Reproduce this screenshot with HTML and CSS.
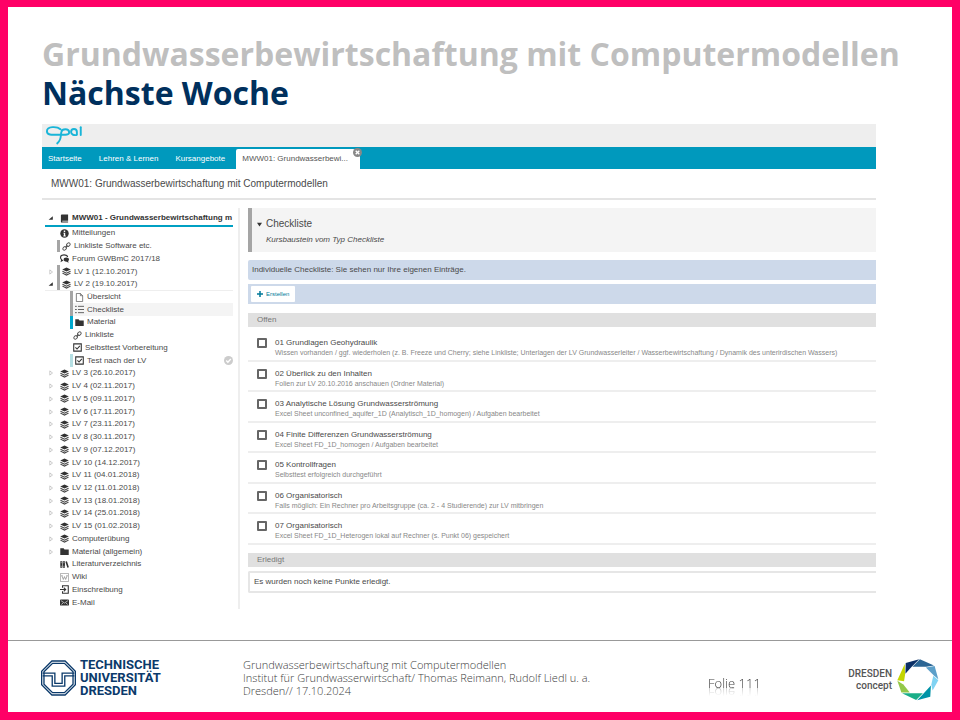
FILE: index.html
```html
<!DOCTYPE html>
<html lang="de">
<head>
<meta charset="utf-8">
<meta name="viewport" content="width=device-width, initial-scale=1">
<title>Grundwasserbewirtschaftung mit Computermodellen – Nächste Woche</title>
<link rel="stylesheet" href="styles.css">
</head>
<body>
<svg class="defs" aria-hidden="true">
  <symbol id="closed" viewBox="0 0 10 10"><path d="M3 1.500 7.500 5 3 8.500Z" fill="#fff" stroke="#aaa"/></symbol>
  <symbol id="open" viewBox="0 0 10 10"><path d="M8 2V8H1Z" fill="#333"/></symbol>
  <symbol id="book" viewBox="0 0 10 10"><path d="M1 1.500Q1 .5 2 .5H9V7.500H2.500V8.200H9V9.500H2Q1 9.500 1 8.500Z" fill="#333"/></symbol>
  <symbol id="info" viewBox="0 0 10 10"><circle cx="5" cy="5" r="4.700" fill="#333"/><path d="M4.200 1.800H5.800V3.200H4.200ZM3.700 4.200H5.800V7.300H6.400V8.200H3.700V7.300H4.300V5H3.700Z" fill="#fff"/></symbol>
  <symbol id="link" viewBox="0 0 10 10"><g fill="none" stroke="#555" stroke-width="1.100"><rect x="-2.300" y="-1.600" width="4.600" height="3.200" rx="1.600" transform="translate(3 7) rotate(-45)"/><rect x="-2.300" y="-1.600" width="4.600" height="3.200" rx="1.600" transform="translate(7 3) rotate(-45)"/><path d="M3.800 6.200 6.200 3.800"/></g></symbol>
  <symbol id="forum" viewBox="0 0 10 10"><path d="M4.500 1C2 1 .6 2.300.6 4c0 1 .5 1.800 1.300 2.300L1.500 8l2-1.200M4.500 1C7 1 8.300 2 8.500 3.300" fill="none" stroke="#333" stroke-width="1.200"/><path d="M7 3.800c2 0 3 1 3 2.300 0 .8-.4 1.400-1 1.800l.6 1.900-2.300-1.300C5 8.500 4 7.500 4 6.100s1-2.300 3-2.300Z" fill="#333"/></symbol>
  <symbol id="layers" viewBox="0 0 10 10"><path d="M5 .5 9.700 2.700 5 5 .3 2.700Z" fill="#333"/><path d="M.5 4.700 5 6.800 9.500 4.700M.5 6.800 5 9 9.500 6.800" fill="none" stroke="#444" stroke-width="1.200"/></symbol>
  <symbol id="page" viewBox="0 0 10 10"><path d="M1.500.5H6L8.500 3V9.500H1.500ZM6 .5V3H8.500" fill="none" stroke="#555" stroke-width=".8"/></symbol>
  <symbol id="list" viewBox="0 0 10 10"><path d="M0 1.500H2M0 5H2M0 8.500H2M3.300 1.500H10M3.300 5H10M3.300 8.500H10" stroke="#555"/></symbol>
  <symbol id="folder" viewBox="0 0 10 10"><path d="M.3 1.500H4L5 2.700H9.700V9H.3Z" fill="#333"/></symbol>
  <symbol id="test" viewBox="0 0 10 10"><path d="M.8 1H9.200V9H.8Z" fill="none" stroke="#333" stroke-width="1.200"/><path d="M2.700 4.800 4.500 6.700 7.600 3.200" fill="none" stroke="#333" stroke-width="1.200"/></symbol>
  <symbol id="library" viewBox="0 0 10 10"><path d="M.3 1.500H2.600V8.500H.3ZM3.200 1.500H5.500V8.500H3.200ZM6 2 7.700 1.500 9.900 8.100 8.200 8.600Z" fill="#333"/><path d="M.6 3H2.300M3.500 3H5.200M.6 7H2.300M3.500 7H5.200" stroke="#fff" stroke-width=".5"/></symbol>
  <symbol id="wiki" viewBox="0 0 10 10"><path d="M.5.5H9.500V9.500H.5Z" fill="none" stroke="#888" stroke-width=".7"/><path d="M2 3 3.700 7.200 5 4 6.300 7.200 8 3M1.500 3H3M7 3H8.500" fill="none" stroke="#777" stroke-width=".7"/></symbol>
  <symbol id="enrol" viewBox="0 0 10 10"><path d="M2.800 3V.8H9.200V9.200H2.800V7M0 5H6M4.200 3 6.300 5 4.200 7" fill="none" stroke="#333" stroke-width="1.200"/></symbol>
  <symbol id="mail" viewBox="0 0 10 10"><rect y="1.800" width="10" height="6.600" rx="1" fill="#333"/><path d="M1.200 3 5 5.600 8.800 3M1.500 7.200 3.500 5.500M8.500 7.200 6.500 5.500" fill="none" stroke="#fff" stroke-width=".7"/></symbol>
</svg>

<div class="slide">
  <header class="headline">
    <h1>Grundwasserbewirtschaftung mit Computermodellen</h1>
    <h2>Nächste Woche</h2>
  </header>

  <main class="app">
    <div class="brand">
      <svg viewBox="42 30 118 62" role="img" aria-label="Opal"><g fill="none" stroke="#19b5d8" stroke-width="6" stroke-linecap="round"><path d="M90 43C80 34 48 33 48 49C48 62 62 61 84 60C100 60 118 63 117 52C116 40 95 41 93 51C90 62 94 76 80 87"/><path d="M141 60V52C141 39 123 39 123 52C123 61 133 62 140 61"/><path d="M153 37V61"/></g></svg>
    </div>
    <nav class="tabs">
      <a href="#">Startseite</a>
      <a href="#">Lehren &amp; Lernen</a>
      <a href="#">Kursangebote</a>
      <div class="tab-active">
        <a href="#" aria-current="page">MWW01: Grundwasserbewi...</a>
        <button class="tab-close" type="button" aria-label="Tab schließen"><svg viewBox="0 0 10 10"><circle cx="5" cy="5" r="5" fill="#888"/><path d="M3 3 7 7M7 3 3 7" stroke="#fff" stroke-width="1.500"/></svg></button>
      </div>
    </nav>
    <p class="course-title">MWW01: Grundwasserbewirtschaftung mit Computermodellen</p>

    <div class="columns">
      <nav class="tree" aria-label="Kursinhalt">
        <a class="root" href="#"><svg class="caret"><use href="#open"/></svg><svg class="icon"><use href="#book"/></svg><span>MWW01 - Grundwasserbewirtschaftung m</span></a>
        <ul>
          <li><a href="#"><svg class="icon"><use href="#info"/></svg>Mitteilungen</a></li>
          <li class="marked"><a href="#"><svg class="icon"><use href="#link"/></svg>Linkliste Software etc.</a></li>
          <li><a href="#"><svg class="icon"><use href="#forum"/></svg>Forum GWBmC 2017/18</a></li>
          <li class="marked"><svg class="caret"><use href="#closed"/></svg><a href="#"><svg class="icon"><use href="#layers"/></svg>LV 1 (12.10.2017)</a></li>
          <li class="marked"><svg class="caret"><use href="#open"/></svg><a href="#"><svg class="icon"><use href="#layers"/></svg>LV 2 (19.10.2017)</a></li>
          <li class="child marked first"><a href="#"><svg class="icon"><use href="#page"/></svg>Übersicht</a></li>
          <li class="child marked current"><a href="#" aria-current="true"><svg class="icon"><use href="#list"/></svg>Checkliste</a></li>
          <li class="child marked cyan"><a href="#"><svg class="icon"><use href="#folder"/></svg>Material</a></li>
          <li class="child"><a href="#"><svg class="icon"><use href="#link"/></svg>Linkliste</a></li>
          <li class="child"><a href="#"><svg class="icon"><use href="#test"/></svg>Selbsttest Vorbereitung</a></li>
          <li class="child marked pale"><a href="#"><svg class="icon"><use href="#test"/></svg>Test nach der LV</a><svg class="done" viewBox="0 0 10 10"><circle cx="5" cy="5" r="5" fill="#ccc"/><path d="M2.500 5 4.300 6.900 7.600 3.400" fill="none" stroke="#fff" stroke-width="1.500"/></svg></li>
          <li><svg class="caret"><use href="#closed"/></svg><a href="#"><svg class="icon"><use href="#layers"/></svg>LV 3 (26.10.2017)</a></li>
          <li><svg class="caret"><use href="#closed"/></svg><a href="#"><svg class="icon"><use href="#layers"/></svg>LV 4 (02.11.2017)</a></li>
          <li><svg class="caret"><use href="#closed"/></svg><a href="#"><svg class="icon"><use href="#layers"/></svg>LV 5 (09.11.2017)</a></li>
          <li><svg class="caret"><use href="#closed"/></svg><a href="#"><svg class="icon"><use href="#layers"/></svg>LV 6 (17.11.2017)</a></li>
          <li><svg class="caret"><use href="#closed"/></svg><a href="#"><svg class="icon"><use href="#layers"/></svg>LV 7 (23.11.2017)</a></li>
          <li><svg class="caret"><use href="#closed"/></svg><a href="#"><svg class="icon"><use href="#layers"/></svg>LV 8 (30.11.2017)</a></li>
          <li><svg class="caret"><use href="#closed"/></svg><a href="#"><svg class="icon"><use href="#layers"/></svg>LV 9 (07.12.2017)</a></li>
          <li><svg class="caret"><use href="#closed"/></svg><a href="#"><svg class="icon"><use href="#layers"/></svg>LV 10 (14.12.2017)</a></li>
          <li><svg class="caret"><use href="#closed"/></svg><a href="#"><svg class="icon"><use href="#layers"/></svg>LV 11 (04.01.2018)</a></li>
          <li><svg class="caret"><use href="#closed"/></svg><a href="#"><svg class="icon"><use href="#layers"/></svg>LV 12 (11.01.2018)</a></li>
          <li><svg class="caret"><use href="#closed"/></svg><a href="#"><svg class="icon"><use href="#layers"/></svg>LV 13 (18.01.2018)</a></li>
          <li><svg class="caret"><use href="#closed"/></svg><a href="#"><svg class="icon"><use href="#layers"/></svg>LV 14 (25.01.2018)</a></li>
          <li><svg class="caret"><use href="#closed"/></svg><a href="#"><svg class="icon"><use href="#layers"/></svg>LV 15 (01.02.2018)</a></li>
          <li><svg class="caret"><use href="#closed"/></svg><a href="#"><svg class="icon"><use href="#layers"/></svg>Computerübung</a></li>
          <li><svg class="caret"><use href="#closed"/></svg><a href="#"><svg class="icon"><use href="#folder"/></svg>Material (allgemein)</a></li>
          <li><a href="#"><svg class="icon"><use href="#library"/></svg>Literaturverzeichnis</a></li>
          <li><a href="#"><svg class="icon"><use href="#wiki"/></svg>Wiki</a></li>
          <li><a href="#"><svg class="icon"><use href="#enrol"/></svg>Einschreibung</a></li>
          <li><a href="#"><svg class="icon"><use href="#mail"/></svg>E-Mail</a></li>
        </ul>
      </nav>

      <section class="content">
        <div class="module">
          <h3><svg viewBox="0 0 6 6"><path d="M0 1H6L3 5.500Z" fill="#333"/></svg>Checkliste</h3>
          <p>Kursbaustein vom Typ Checkliste</p>
        </div>
        <p class="notice">Individuelle Checkliste: Sie sehen nur Ihre eigenen Einträge.</p>
        <div class="toolbar">
          <button type="button"><svg viewBox="0 0 6 6"><path d="M3 0V6M0 3H6" stroke="#007a99" stroke-width="1.500"/></svg>Erstellen</button>
        </div>
        <h4>Offen</h4>
        <ul class="checks">
          <li><input type="checkbox" id="c1"><label for="c1">01 Grundlagen Geohydraulik<small>Wissen vorhanden / ggf. wiederholen (z. B. Freeze und Cherry; siehe Linkliste; Unterlagen der LV Grundwasserleiter / Wasserbewirtschaftung / Dynamik des unterirdischen Wassers)</small></label></li>
          <li><input type="checkbox" id="c2"><label for="c2">02 Überlick zu den Inhalten<small>Folien zur LV 20.10.2016 anschauen (Ordner Material)</small></label></li>
          <li><input type="checkbox" id="c3"><label for="c3">03 Analytische Lösung Grundwasserströmung<small>Excel Sheet unconfined_aquifer_1D (Analytisch_1D_homogen) / Aufgaben bearbeitet</small></label></li>
          <li><input type="checkbox" id="c4"><label for="c4">04 Finite Differenzen Grundwasserströmung<small>Excel Sheet FD_1D_homogen / Aufgaben bearbeitet</small></label></li>
          <li><input type="checkbox" id="c5"><label for="c5">05 Kontrollfragen<small>Selbsttest erfolgreich durchgeführt</small></label></li>
          <li><input type="checkbox" id="c6"><label for="c6">06 Organisatorisch<small>Falls möglich: Ein Rechner pro Arbeitsgruppe (ca. 2 - 4 Studierende) zur LV mitbringen</small></label></li>
          <li><input type="checkbox" id="c7"><label for="c7">07 Organisatorisch<small>Excel Sheet FD_1D_Heterogen lokal auf Rechner (s. Punkt 06) gespeichert</small></label></li>
        </ul>
        <h4>Erledigt</h4>
        <p class="empty">Es wurden noch keine Punkte erledigt.</p>
      </section>
    </div>
  </main>

  <footer class="footer">
    <div class="tud">
      <svg viewBox="32 89 106 107" aria-hidden="true"><g fill="none" stroke="#0b3a6b"><path d="M65 91H105L136 122V163L105 194H65L34 163V122Z" stroke-width="4"/><path d="M67 98H103L129 124V161L103 187H67L41 161V124Z" stroke-width="4"/><path d="M37 128H74V159H96V128H133M37 136H66V167H104V136H133" stroke-width="4"/></g></svg>
      <div>TECHNISCHE<br>UNIVERSITÄT<br>DRESDEN</div>
    </div>
    <p class="credits">Grundwasserbewirtschaftung mit Computermodellen<br>Institut für Grundwasserwirtschaft/ Thomas Reimann, Rudolf Liedl u. a.<br>Dresden// 17.10.2024</p>
    <p class="page-number">Folie 111</p>
    <div class="concept">
      <div>DRESDEN<br>concept</div>
      <svg viewBox="622 86 125 125" aria-hidden="true">
        <path d="M645 101 623 149 643 152 646 133Z" fill="#c3d500"/>
        <path d="M648 98 688 87 665 110 647 130Z" fill="#0b2f66"/>
        <path d="M690 87 732 105 709 109 668 109Z" fill="#2b6594"/>
        <path d="M734 107 745 146 731 134 708 111Z" fill="#5c9fc9"/>
        <path d="M745 149 728 180 724 163 730 136Z" fill="#80d3f3"/>
        <path d="M723 165 721 198 682 209 701 189Z" fill="#0093a7"/>
        <path d="M637 188 679 208 699 188 664 188Z" fill="#19ae88"/>
        <path d="M623 151 635 186 660 186 641 162Z" fill="#93c84a"/>
      </svg>
    </div>
  </footer>
</div>
</body>
</html>
```
FILE: styles.css
```css
* { box-sizing: border-box; }
body, h1, h2, h3, h4, p, ul { margin: 0; padding: 0; }
ul { list-style: none; }
a { color: inherit; text-decoration: none; }
svg { display: block; flex: none; }
button { font: inherit; border: 0; padding: 0; cursor: pointer; }
.defs { position: absolute; width: 0; height: 0; }

.slide {
  min-height: 100vh;
  display: flex;
  flex-direction: column;
  border: 8px solid #ff0066;
  border-top-width: 7px;
  background: #fff;
}

.headline {
  padding: 27px 34px 12px;
  font-family: "Open Sans", sans-serif;
}
.headline h1, .headline h2 { font-size: 32px; line-height: 39px; font-weight: 700; }
.headline h1 { color: #bfbfbf; }
.headline h2 { color: #00305d; }

.app {
  flex: 1;
  display: flex;
  flex-direction: column;
  margin: 0 76px 31px 34px;
  font: 8px/10px "Liberation Sans", Arial, sans-serif;
  color: #4a4a4a;
}
.brand { height: 23px; padding: 1px 3px; background: #eee; }
.brand svg { width: 38px; height: 20px; }

.tabs {
  display: flex;
  align-items: flex-end;
  gap: 5px;
  height: 22px;
  background: #0099bd;
  color: #fff;
}
.tabs a { padding: 0 6px; line-height: 20px; }
.tab-active {
  position: relative;
  width: 124px;
  background: #fff;
  color: #555;
  border-radius: 2px 2px 0 0;
}
.tab-close { position: absolute; top: -1px; right: -2px; background: none; }
.tab-close svg { width: 9px; height: 9px; }

.course-title {
  padding: 0 9px;
  font-size: 10px;
  line-height: 29px;
  border-bottom: 2px solid #e4e4e4;
}

.columns {
  flex: 1;
  display: grid;
  grid-template-columns: 198px 1fr;
  gap: 8px;
  padding-top: 8px;
}

.tree {
  display: flex;
  flex-direction: column;
  padding: 3px 5px 0 3px;
  border-right: 2px solid #eee;
}
.root {
  display: flex;
  align-items: center;
  height: 16px;
  border-bottom: 2px solid #00a0c3;
  font-weight: 700;
  color: #333;
  white-space: nowrap;
}
.root .icon { margin: 0 3px 0 6px; }
.caret { width: 6px; height: 6px; margin-left: 3px; }
.icon { width: 9px; height: 9px; }
.tree ul { flex: 1; display: grid; grid-auto-rows: 1fr; }
.tree li { position: relative; display: flex; align-items: center; }
.tree li a {
  flex: 1;
  align-self: stretch;
  display: flex;
  align-items: center;
  gap: 3px;
  margin-left: 12px;
  padding-left: 3px;
}
.tree .caret + a { margin-left: 3px; }
.tree .marked a { border-left: 3px solid #a5a5a5; }
.tree .child a { margin-left: 25px; }
.tree .marked a { padding-left: 2px; }
.tree .current a { background: linear-gradient(#f4f4f4, #f4f4f4) padding-box; }
.tree .cyan a { border-color: #00a9cf; }
.tree .pale a { border-color: #b5dfe3; }
.tree .first { box-shadow: 0 -1px #eee; }
.done { position: absolute; right: 0; width: 9px; height: 9px; }

.content { display: flex; flex-direction: column; min-width: 0; }
.module {
  height: 44px;
  padding: 9px 14px 0;
  background: #f4f4f4;
  border-left: 4px solid #a5a5a5;
}
.module h3 {
  display: flex;
  align-items: center;
  gap: 4px;
  margin-left: -9px;
  font-size: 10px;
  line-height: 14px;
  font-weight: 400;
}
.module h3 svg { width: 5px; height: 5px; }
.module p { margin-top: 4px; font-style: italic; }
.notice {
  margin-top: 8px;
  padding: 0 4px;
  line-height: 20px;
  background: #cdd9ea;
  border-radius: 2px 0 0 2px;
}
.toolbar { margin: 4px 0 1px; padding: 2px 3px; height: 20px; background: #cdd9ea; }
.toolbar button {
  display: flex;
  align-items: center;
  gap: 3px;
  height: 16px;
  padding: 0 6px;
  font-size: 6px;
  color: #007a99;
  background: #fff;
  border-radius: 1px;
}
.toolbar svg { width: 6px; height: 6px; }
.content h4 {
  margin-top: 8px;
  padding: 0 9px;
  font-size: 8px;
  line-height: 14px;
  font-weight: 400;
  color: #777;
  background: #e0e0e0;
}
.checks { flex: 1; display: grid; grid-auto-rows: 1fr; margin-top: 4px; }
.checks li { display: flex; gap: 8px; padding: 7px 9px 0; border-bottom: 2px solid #eee; }
.checks input {
  appearance: none;
  width: 10px;
  height: 10px;
  margin: 0;
  border: 2px solid #666;
  border-radius: 1px;
  background: #fff;
}
.checks input:checked { background: #0099bd; }
.checks label { flex: 1; }
.checks small { display: block; font-size: 7px; line-height: 9px; color: #888; }
.empty {
  margin: 4px 0 16px;
  padding: 0 4px;
  line-height: 18px;
  border: 2px solid #e6e6e6;
  border-right: 0;
  border-radius: 2px 0 0 2px;
}

.footer {
  display: grid;
  grid-template-columns: 202px 465px 1fr auto;
  align-items: center;
  height: 72px;
  padding: 0 13px 0 33px;
  border-top: 1px solid #999;
  font-family: "Open Sans", sans-serif;
}
.tud {
  display: flex;
  align-items: center;
  gap: 4px;
  margin-top: 2px;
  font: 700 13px/13px Roboto, sans-serif;
  color: #0b3a6b;
}
.tud svg { width: 35px; height: 36px; }
.credits { margin-top: 2px; font-size: 11px; line-height: 13px; font-weight: 300; color: #404040; }
.page-number {
  margin-top: 12px;
  font-size: 13px;
  line-height: 16px;
  font-weight: 300;
  color: #404040;
  -webkit-box-reflect: below -6px linear-gradient(transparent 30%, rgba(0, 0, 0, 0.5));
}
.concept {
  display: flex;
  align-items: center;
  gap: 5px;
  margin-top: 6px;
  font: 500 10px/12px Roboto, sans-serif;
  color: #555;
  text-align: right;
}
.concept svg { width: 42px; height: 42px; }
```
